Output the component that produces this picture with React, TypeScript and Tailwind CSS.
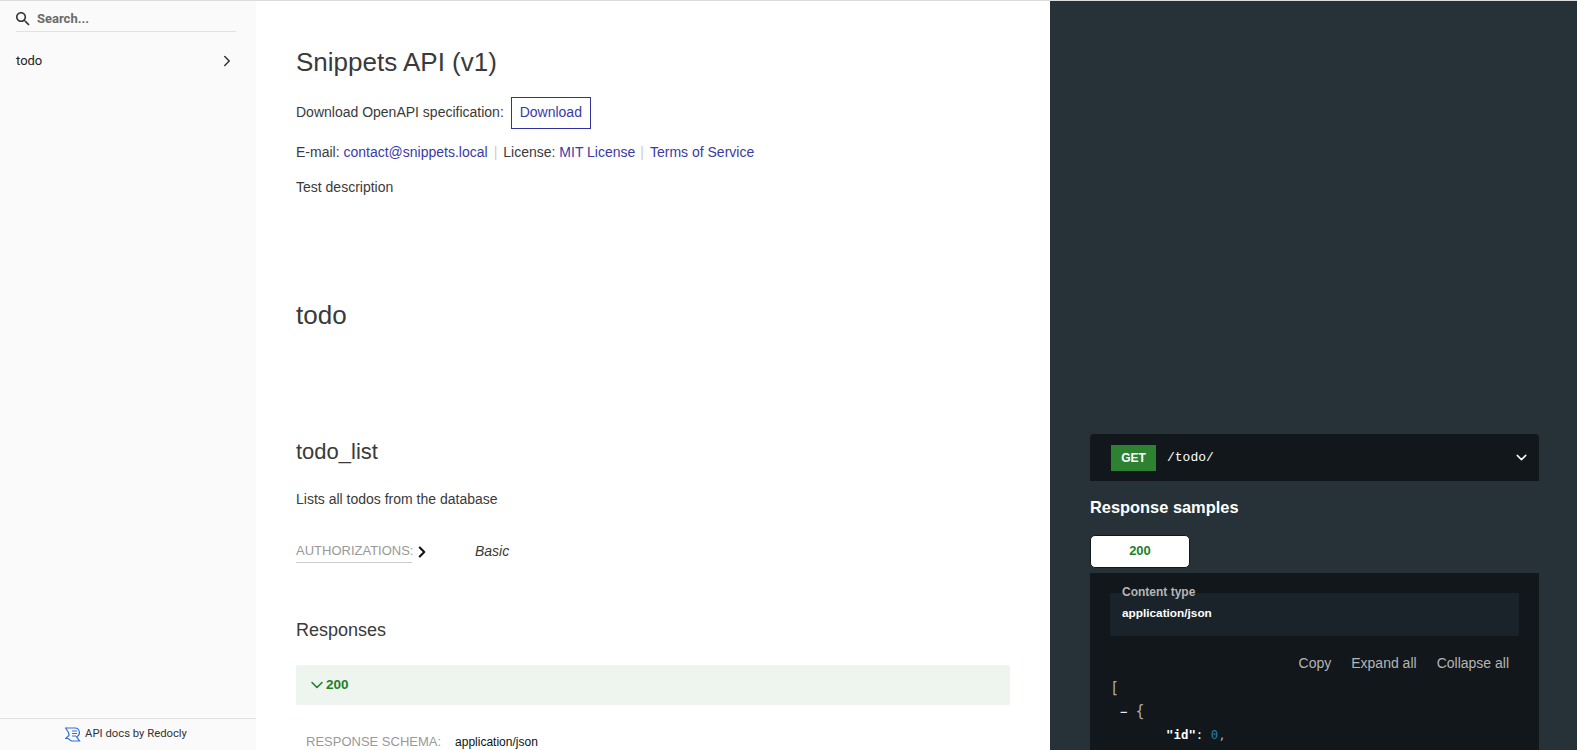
import { ChevronDown, ChevronRight } from 'lucide-react'

const sans = "font-['Liberation_Sans',Arial,sans-serif]"

function RedoclyLogo() {
  return (
    <svg viewBox="0 0 16 15" className="h-[15px] w-[16px]" fill="none" stroke="#2f6fdc" strokeWidth={1.2}>
      <path d="M0.5 1h9.5a4.5 4.5 0 0 1 1.5 8.7L14.5 14H6.5L3 11.5H0.5L4 8.5 3.5 5.5z" />
      <path d="M7 4h5M7 6.5h5M7 9h4" />
    </svg>
  )
}

function Sidebar() {
  return (
    <aside className="flex h-full w-[256px] shrink-0 flex-col bg-[#fafafa]">
      <div className="ml-4 mr-5 flex h-[31px] items-center gap-[7px] border-b border-[#e1e1e1] pt-[5px]">
        <svg viewBox="3 3 18 18" className="h-[14px] w-[14px]" fill="#333">
          <path d="M15.5 14h-.79l-.28-.27C15.41 12.59 16 11.11 16 9.5 16 5.91 13.09 3 9.5 3S3 5.91 3 9.5 5.91 16 9.5 16c1.61 0 3.09-.59 4.23-1.57l.27.28v.79l5 4.99L20.49 19l-4.99-5zm-6 0C7.01 14 5 11.99 5 9.5S7.01 5 9.5 5 14 7.01 14 9.5 11.99 14 9.5 14z" />
        </svg>
        <span className="font-['Roboto',sans-serif] text-[13px] font-bold text-[#6b6b6b]">Search...</span>
      </div>
      <div className="mt-[11px] flex h-[35px] items-center justify-between pl-4 pr-[20px] font-['Roboto',sans-serif] text-[13px] text-[#222]">
        <span>todo</span>
        <ChevronRight size={18} strokeWidth={2} className="text-[#333]" />
      </div>
      <div className="mt-auto flex h-[32px] items-center justify-center gap-[4px] border-t border-[#e1e1e1] pr-[4px] font-['Roboto',sans-serif] text-[11.3px] text-[#333]">
        <RedoclyLogo />
        <span>API docs by Redocly</span>
      </div>
    </aside>
  )
}

function Middle() {
  return (
    <main className={`${sans} h-full min-w-0 flex-1 overflow-hidden bg-white pl-[40px] pr-[40px] text-[14px] text-[#3a3a3a]`}>
      <h1 className="mt-[44px] text-[26px] leading-[34px]">Snippets API (v1)</h1>
      <div className="mt-[18px] flex h-[32px] items-center">
        <span className="pb-[1px]">Download OpenAPI specification:</span>
        <a className="ml-[7px] flex h-[32px] w-[80px] items-center justify-center border border-[#32329f] pb-[1px] text-[#3a3aa8]">Download</a>
      </div>
      <p className="mt-[13px] leading-[20px]">
        E-mail: <a className="text-[#3a3aa8]">contact@snippets.local</a>
        <span className="mx-[6px] text-[#ccc]">|</span>
        License: <a className="text-[#3a3aa8]">MIT License</a>
        <span className="ml-[5px] mr-[6px] text-[#ccc]">|</span>
        <a className="text-[#3a3aa8]">Terms of Service</a>
      </p>
      <p className="mt-[15px] leading-[20px]">Test description</p>

      <h2 className="mt-[101px] text-[26px] leading-[34px]">todo</h2>

      <h3 className="mt-[106px] text-[22px] leading-[28px]">todo_list</h3>
      <p className="mt-[23px] leading-[20px]">Lists all todos from the database</p>

      <div className="mt-[31px] flex items-center">
        <span className="flex h-[23px] w-[116px] items-center border-b border-[#ccc] text-[13px] text-[#999]">AUTHORIZATIONS:</span>
        <ChevronRight size={18} strokeWidth={2.8} className="ml-[1px] text-[#111]" />
        <span className="ml-[44px] italic">Basic</span>
      </div>

      <h3 className="mt-[55px] text-[18px] leading-[24px]">Responses</h3>

      <div className="mt-[23px] flex h-[40px] items-center rounded-[2px] bg-[#eef4ee] pl-[11px] text-[13.5px] font-bold text-[#1d8127]">
        <ChevronDown size={20} strokeWidth={1.9} />
        <span className="ml-[-1px]">200</span>
      </div>

      <div className="mt-[27px] flex items-center pl-[10px] leading-[20px]">
        <span className="text-[13px] text-[#999]">RESPONSE SCHEMA:</span>
        <span className="ml-[14px] text-[12px] text-[#111]">application/json</span>
      </div>
    </main>
  )
}

function RightPanel() {
  return (
    <aside className={`${sans} h-full w-[527px] shrink-0 overflow-hidden bg-[#263238] pl-[40px] pr-[38px] pt-[433px] text-white`}>
      <div className="flex h-[47px] items-center rounded-t-[4px] bg-[#11171a] pl-[21px] pr-[9px]">
        <span className="flex h-[26px] w-[45px] items-center justify-center bg-[#2f8132] text-[12px] font-bold text-[#fff]">GET</span>
        <span className="ml-[11px] font-['Liberation_Mono',monospace] text-[13px] text-white">/todo/</span>
        <ChevronDown size={17} strokeWidth={2} className="ml-auto" />
      </div>
      <h3 className="mt-[14px] text-[16.4px] font-bold leading-[24px]">Response samples</h3>
      <div className="mt-[16px] flex h-[33px] w-[100px] items-center justify-center rounded-[5px] border border-[#11171a] bg-white pb-[2px] text-[13px] font-bold text-[#1d8127]">200</div>
      <div className="mt-[5px] h-[300px] bg-[#11171a] px-[20px]">
        <div className="relative mt-0 pt-[20px]">
          <span className="absolute left-[12px] top-[12px] text-[12px] font-bold leading-[14px] text-[#b5b5b5]">Content type</span>
          <div className="flex h-[43px] items-start bg-[#1a2329] pl-[12px] pt-[13px] text-[11.8px] font-bold leading-[14px] text-white">application/json</div>
        </div>
        <div className="mt-[17px] flex justify-end gap-[20px] pr-[10px] text-[14px] leading-[20px] text-[#b5b5b5]">
          <span>Copy</span>
          <span>Expand all</span>
          <span>Collapse all</span>
        </div>
        <div className="mt-[4px] font-['DejaVu_Sans_Mono',monospace] text-[12.4px] leading-[23px] text-white">
          <div className="text-[15px] text-[#aaa]">[</div>
          <div className="flex pl-[10px]">
            <span className="text-white">−</span>
            <span className="ml-[8px] text-[15px] text-[#aaa]">{'{'}</span>
          </div>
          <div className="pl-[56px]">
            <span className="font-bold">"id"</span>: <span className="text-[#2c7bb0]">0</span><span className="text-[#aaa]">,</span>
          </div>
        </div>
      </div>
    </aside>
  )
}

export default function App() {
  return (
    <div className="flex h-[750px] w-full overflow-hidden border-t border-[#dcdcdc]">
      <Sidebar />
      <Middle />
      <RightPanel />
    </div>
  )
}
